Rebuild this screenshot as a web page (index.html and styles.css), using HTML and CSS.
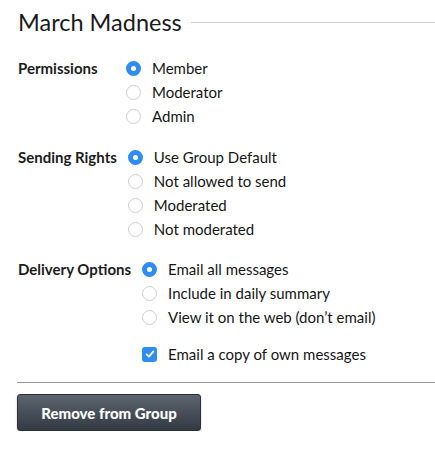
FILE: index.html
```html
<!DOCTYPE html>
<html>
<head>
<meta charset="utf-8">
<link rel="stylesheet" href="styles.css">
</head>
<body>
<div class="page">
  <div class="title-row">
    <h1 class="title">March Madness</h1>
    <div class="title-line"></div>
  </div>

  <div class="section">
    <div class="label label-wide">Permissions</div>
    <div class="options">
      <div class="opt"><span class="radio checked"></span><span>Member</span></div>
      <div class="opt"><span class="radio"></span><span>Moderator</span></div>
      <div class="opt"><span class="radio"></span><span>Admin</span></div>
    </div>
  </div>

  <div class="section">
    <div class="label">Sending Rights</div>
    <div class="options">
      <div class="opt"><span class="radio checked"></span><span>Use Group Default</span></div>
      <div class="opt"><span class="radio"></span><span>Not allowed to send</span></div>
      <div class="opt"><span class="radio"></span><span>Moderated</span></div>
      <div class="opt"><span class="radio"></span><span>Not moderated</span></div>
    </div>
  </div>

  <div class="section">
    <div class="label">Delivery Options</div>
    <div class="options">
      <div class="opt"><span class="radio checked"></span><span>Email all messages</span></div>
      <div class="opt"><span class="radio"></span><span>Include in daily summary</span></div>
      <div class="opt"><span class="radio"></span><span>View it on the web (don’t email)</span></div>
      <div class="opt opt-check"><span class="checkbox"><svg viewBox="0 0 14 14" width="14" height="14"><path d="M3.6 7.3 L6 9.6 L10.4 4.4" fill="none" stroke="#fff" stroke-width="1.8" stroke-linecap="round" stroke-linejoin="round"/></svg></span><span>Email a copy of own messages</span></div>
    </div>
  </div>

  <hr class="divider">
  <button class="btn">Remove from Group</button>
</div>
</body>
</html>
```
FILE: styles.css
```css
html, body {
  margin: 0;
  padding: 0;
  background: #fff;
}
body {
  font-family: Lato, "Open Sans", sans-serif;
  color: #161616;
}
.page {
  padding: 7px 0 0 18px;
}
.title-row {
  display: flex;
  align-items: center;
  gap: 9px;
}
.title {
  margin: 0;
  font-weight: 400;
  font-size: 23.5px;
  line-height: 30px;
  color: #1a1a1a;
}
.title-line {
  flex: 1;
  height: 1px;
  background: #d0d0d0;
  margin-top: 1px;
}
.section {
  display: flex;
  align-items: flex-start;
  margin-top: 17px;
}
.title-row + .section {
  margin-top: 19px;
}
.section:last-of-type {
  margin-top: 16px;
}
.label {
  font-weight: 700;
  font-size: 15px;
  line-height: 24px;
  margin-right: 11px;
  color: #1c1c1c;
}
.label-wide {
  min-width: 97px;
}
.options {
  display: flex;
  flex-direction: column;
}
.opt {
  display: flex;
  align-items: center;
  gap: 11px;
  height: 24px;
  font-size: 15px;
  color: #161616;
}
.opt-check {
  margin-top: 13px;
}
.radio {
  box-sizing: border-box;
  width: 15px;
  height: 15px;
  border-radius: 50%;
  border: 1px solid #cfcfcf;
  background: #fff;
  flex: none;
}
.radio.checked {
  border: 5px solid #2e8cf2;
  background: #fff;
}
.checkbox {
  box-sizing: border-box;
  width: 15px;
  height: 15px;
  border-radius: 3px;
  background: #2e8cf2;
  display: flex;
  align-items: center;
  justify-content: center;
  flex: none;
}
.checkbox svg {
  display: block;
}
.divider {
  margin: 16px 0 11px -1px;
  border: 0;
  height: 1px;
  background: #9a9a9a;
}
.btn {
  display: block;
  margin-left: -1px;
  width: 184px;
  height: 37px;
  border: 1px solid #2b3038;
  border-radius: 3px;
  background: linear-gradient(#5c646d, #333a43);
  color: #fff;
  font-family: inherit;
  font-weight: 900;
  font-size: 15px;
  box-shadow: 0 1px 2px rgba(0,0,0,0.25);
  padding: 0;
}
```
